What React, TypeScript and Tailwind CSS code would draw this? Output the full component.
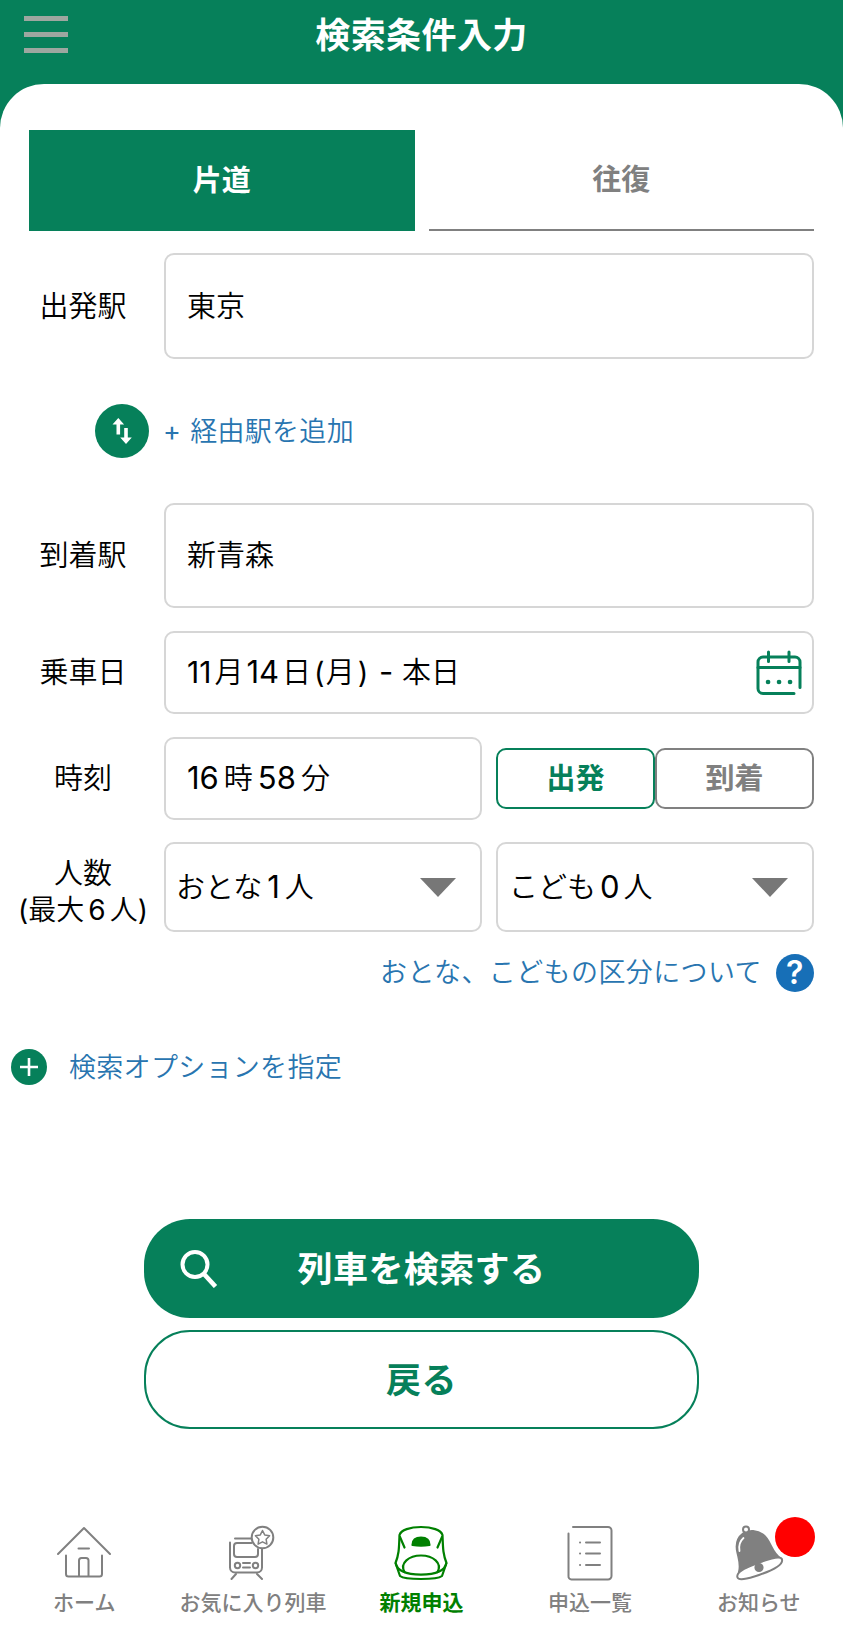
import type { ReactNode } from 'react';

function SwapIcon() {
  return (
    <svg width="54" height="54" viewBox="0 0 54 54" fill="none">
      <circle cx="27" cy="27" r="27" fill="#06805a" />
      <path d="M23.3 30.500V18M31 24v13" stroke="#fff" strokeWidth="3.6" />
      <path d="M17.500 20.500l5.800-6.500 5.800 6.500zM25.200 33.500L31 40l5.800-6.500z" fill="#fff" />
    </svg>
  );
}

function CalendarIcon() {
  return (
    <svg width="46" height="46" viewBox="0 0 46 46" fill="none" stroke="#06805a" strokeWidth="3" strokeLinecap="round">
      <path d="M38 43.5H7a5 5 0 0 1-5-5V12a5 5 0 0 1 5-5h32a5 5 0 0 1 5 5v25.500" />
      <path d="M2 17.500h42M12.500 2v9.500M33 2v9.500" />
      <path d="M12 32h.1M23 32h.1M34 32h.1" strokeWidth="4.600" />
    </svg>
  );
}

function SearchIcon() {
  return (
    <svg width="38" height="38" viewBox="0 0 38 38" fill="none" stroke="#fff" strokeWidth="4">
      <circle cx="15" cy="14.500" r="12.500" />
      <path d="M23.500 23.500l12 13" strokeWidth="4.600" />
    </svg>
  );
}

function HomeIcon() {
  return (
    <svg width="54" height="54" viewBox="0 0 54 54" fill="none" stroke="#808080" strokeWidth="2" strokeLinecap="round" strokeLinejoin="round">
      <path d="M1 28L27 2l26 26" />
      <path d="M9 29.500V48a2.500 2.500 0 0 0 2.500 2.500h31A2.500 2.500 0 0 0 45 48V29.500" />
      <path d="M22 50V34.500a2.500 2.500 0 0 1 2.500-2.500h4.500a2.500 2.500 0 0 1 2.500 2.500V50M21.500 22.500h10.500" />
    </svg>
  );
}

function TrainIcon() {
  return (
    <svg width="48" height="56" viewBox="0 0 48 56" fill="none" stroke="#808080" strokeWidth="2" strokeLinecap="round" strokeLinejoin="round">
      <path d="M6 13.500h16M1 17.500v25a5 5 0 0 0 5 5h22a5 5 0 0 0 5-5V24" />
      <path d="M22.500 18H8a3 3 0 0 0-3 3v8a3 3 0 0 0 3 3h18a3 3 0 0 0 3-3v-5" />
      <circle cx="8.500" cy="40.500" r="2.700" />
      <circle cx="26.500" cy="40.500" r="2.700" />
      <path d="M14 38h7M14 42.500h7M7 49l-4.500 5M28 49l5 5" />
      <circle cx="33.500" cy="12.500" r="10.800" />
      <path d="M33.500 5.500l2.200 4.400 4.900.8-3.500 3.500.8 4.900-4.400-2.300-4.400 2.300.8-4.900-3.500-3.500 4.900-.8z" strokeWidth="1.500" />
    </svg>
  );
}

function ShinkansenIcon() {
  return (
    <svg width="54" height="56" viewBox="0 0 54 56" fill="none" stroke="#008000" strokeWidth="2.200" strokeLinecap="round" strokeLinejoin="round">
      <path d="M5.500 10C7 5 16 2 27 2s20 3 21.500 8C49 24 49 29 52.500 38L48 51c-5 4-37 4-42 0L1.500 38C5 29 5 24 5.500 10z" />
      <path d="M6 12l4.500 10.500M48 12l-4.500 10.500M1.800 38.500c.7 3.500 2.600 6 7 8 9 4.200 27.400 4.200 36.400 0 4.400-2 6.300-4.500 7-8" />
      <path d="M10.500 47C5.500 38 15 30.500 27 30.500S48.500 38 43.500 47" />
      <path d="M18.500 20c0-5 3-7.500 8.500-7.500s8.500 2.500 8.500 7.500c-5 .800-12 .800-17 0z" fill="#008000" />
    </svg>
  );
}

function ListIcon() {
  return (
    <svg width="46" height="56" viewBox="0 0 46 56" fill="none" stroke="#808080" strokeWidth="2" strokeLinecap="round" strokeLinejoin="round">
      <path d="M6 2h35a3.500 3.500 0 0 1 3.500 3.500V51a3.500 3.500 0 0 1-3.500 3.500H4.500A3 3 0 0 1 1.500 51V8.500" />
      <path d="M19 17.500h14M19 28.500h14M19 40h14M13 17.500h.1M13 28.500h.1M13 40h.1" />
    </svg>
  );
}

function BellIcon() {
  return (
    <svg width="50" height="56" viewBox="0 0 50 56" fill="none" stroke="#808080" strokeWidth="2" strokeLinecap="round" strokeLinejoin="round">
      <path d="M9 8.500C3 13 1.500 20 3.500 28c1.500 7 3.500 12 1.500 19L20 48l27.500-14C37 28 37 15 29 9.500 23.500 5.500 15 4.500 9 8.500z" fill="#808080" />
      <path d="M3.500 52.500C1.500 47 12 42.500 20 39.500S46.500 29 48 34.500 38 45.500 25 50 4.500 55.500 3.500 52.500z" fill="#fff" />
      <circle cx="25" cy="42.500" r="3.600" fill="#808080" />
      <circle cx="12" cy="4.500" r="3" fill="#fff" />
      <path d="M9.500 13c-4 3.500-5 7.500-4 13" stroke="#fff" strokeWidth="1.800" />
    </svg>
  );
}

function Label({ children }: { children: ReactNode }) {
  return <div className="flex w-[164px] shrink-0 justify-center pl-[2px] text-center text-[29px] leading-[37px]">{children}</div>;
}

const box = 'flex items-center rounded-[10px] border-2 border-[#d6d6d6]';

const Caret = () => (
  <svg width="36" height="19" viewBox="0 0 36 19">
    <path d="M0 0h36L18 19z" fill="#777" />
  </svg>
);

const navItems = [
  { label: 'ホーム', icon: <HomeIcon /> },
  { label: 'お気に入り列車', icon: <TrainIcon /> },
  { label: '新規申込', icon: <ShinkansenIcon />, active: true },
  { label: '申込一覧', icon: <ListIcon /> },
  { label: 'お知らせ', icon: <BellIcon />, badge: true },
];

export default function App() {
  return (
    <div className="h-[1630px] w-[843px] overflow-hidden bg-[#06805a] font-['Inter','Noto_Sans_CJK_JP',sans-serif] font-[350] text-black">
      {/* Header */}
      <header className="grid h-[84px] grid-cols-[68px_1fr_68px] items-center pb-[16px]">
        <div className="flex flex-col gap-[11px] pl-6">
          <div className="h-[5px] bg-[#9da7a0]" />
          <div className="h-[5px] bg-[#9da7a0]" />
          <div className="h-[5px] bg-[#9da7a0]" />
        </div>
        <h1 className="pt-[2px] text-center text-[35px] font-bold leading-none tracking-[0.4px] text-white">検索条件入力</h1>
      </header>

      <main className="flex h-[1546px] flex-col rounded-t-[44px] bg-white pt-[46px]">
        {/* Tabs */}
        <div className="flex h-[101px] gap-[14px] px-[29px] text-[29px] font-bold">
          <button className="flex-1 bg-[#06805a] text-white">片道</button>
          <button className="flex-1 border-b-2 border-[#808080] text-[#808080]">往復</button>
        </div>

        {/* Stations */}
        <div className="mt-[22px] flex h-[106px] items-center pr-[29px]">
          <Label>出発駅</Label>
          <div className={`${box} h-full flex-1 px-[21px] pt-[2px] text-[29px]`}>東京</div>
        </div>
        <div className="mt-[45px] flex h-[54px] items-center gap-[14px] pl-[95px] text-[27px] tracking-[0.3px] text-[#2875b0]">
          <SwapIcon />
          <div className="flex gap-[9px] pt-[3px]">
            <span className="font-normal">+</span>
            <span>経由駅を追加</span>
          </div>
        </div>
        <div className="mt-[45px] flex h-[105px] items-center pr-[29px]">
          <Label>到着駅</Label>
          <div className={`${box} h-full flex-1 px-[21px] pt-[1px] text-[29px]`}>新青森</div>
        </div>

        {/* Date and time */}
        <div className="mt-[23px] flex h-[83px] items-center pr-[29px]">
          <Label>乗車日</Label>
          <div className={`${box} h-full flex-1 justify-between pl-[21px] pr-[10px] text-[29px]`}>
            <div className="flex items-center whitespace-pre">
              <span className="text-[30px] font-normal">11</span>
              <span className="ml-[3px]">月</span>
              <span className="ml-[3px] text-[31px] font-normal">14</span>
              <span className="ml-[3px]">日</span>
              <span className="ml-[3px] font-normal">(</span>
              <span className="ml-[1px]">月</span>
              <span className="ml-[3px] font-normal">)</span>
              <span className="ml-[2px] text-[31px] font-normal"> - </span>
              <span>本日</span>
            </div>
            <CalendarIcon />
          </div>
        </div>
        <div className="mt-[23px] flex h-[83px] items-center pr-[29px]">
          <Label>時刻</Label>
          <div className={`${box} h-full w-[318px] gap-[5px] px-[21px] text-[29px]`}>
            <span className="text-[31px] font-normal">16</span>
            <span>時</span>
            <span className="text-[31px] font-normal">58</span>
            <span>分</span>
          </div>
          <div className="ml-[14px] flex h-[61px] flex-1 text-[29px] font-bold">
            <button className="flex-1 rounded-[10px] border-2 border-[#06805a] text-[#06805a]">出発</button>
            <button className="flex-1 rounded-[10px] border-2 border-[#808080] text-[#808080]">到着</button>
          </div>
        </div>

        {/* Passengers */}
        <div className="mt-[22px] flex h-[90px] items-center pr-[29px]">
          <Label>
            <div className="mt-[9px]">
              人数
              <div className="text-[28px]">
                <span className="font-normal">(</span>最大<span className="mx-[4px] font-normal">6</span>人<span className="font-normal">)</span>
              </div>
            </div>
          </Label>
          <div className={`${box} h-full w-[318px] justify-between pl-[10px] pr-[24px] text-[29px]`}>
            <span className="pt-[1px]">
              おとな<span className="mx-[5px] text-[31px] font-normal">1</span>人
            </span>
            <Caret />
          </div>
          <div className={`${box} ml-[14px] h-full w-[318px] justify-between pl-[11px] pr-[24px] text-[29px]`}>
            <span className="pt-[1px]">
              こども<span className="mx-[4px] text-[31px] font-normal">0</span>人
            </span>
            <Caret />
          </div>
        </div>
        <div className="mt-[22px] flex h-[38px] items-center justify-end gap-[14px] pr-[29px] text-[27px] tracking-[0.4px] text-[#2875b0]">
          <span>おとな、こどもの区分について</span>
          <span className="flex size-[38px] items-center justify-center rounded-full bg-[#176fb7] text-[32px] font-semibold text-white">?</span>
        </div>

        {/* Options */}
        <div className="mt-[57px] flex h-9 items-center gap-[22px] pl-[11px] text-[27px] tracking-[0.3px] text-[#2875b0]">
          <svg width="36" height="36" viewBox="0 0 36 36">
            <circle cx="18" cy="18" r="18" fill="#06805a" />
            <path d="M9 18h18M18 9v18" stroke="#fff" strokeWidth="2.600" />
          </svg>
          <span className="pt-[2px]">検索オプションを指定</span>
        </div>

        {/* Actions */}
        <div className="mx-auto mt-[134px] flex w-[555px] flex-col gap-3 text-[35px] font-bold tracking-[0.4px]">
          <button className="grid h-[99px] grid-cols-[74px_1fr_74px] items-center rounded-[46px] bg-[#06805a] text-white">
            <span className="justify-self-end">
              <SearchIcon />
            </span>
            <span className="pt-[2px]">列車を検索する</span>
          </button>
          <button className="h-[99px] rounded-[46px] border-2 border-[#06805a] pt-[2px] text-[#06805a]">戻る</button>
        </div>

        {/* Bottom navigation */}
        <nav className="mt-[96px] grid grid-cols-5 text-[21px] font-medium text-[#808080]">
          {navItems.map((item) => (
            <div key={item.label} className="relative flex flex-col items-center">
              <div className="flex h-[56px] items-center">{item.icon}</div>
              <span className={item.active ? 'mt-[7px] font-bold leading-[30px] text-[#008000]' : 'mt-[7px] leading-[30px]'}>{item.label}</span>
              {item.badge && <span className="absolute -top-[8px] right-[28px] size-10 rounded-full bg-[#ff0000]" />}
            </div>
          ))}
        </nav>
      </main>
    </div>
  );
}
